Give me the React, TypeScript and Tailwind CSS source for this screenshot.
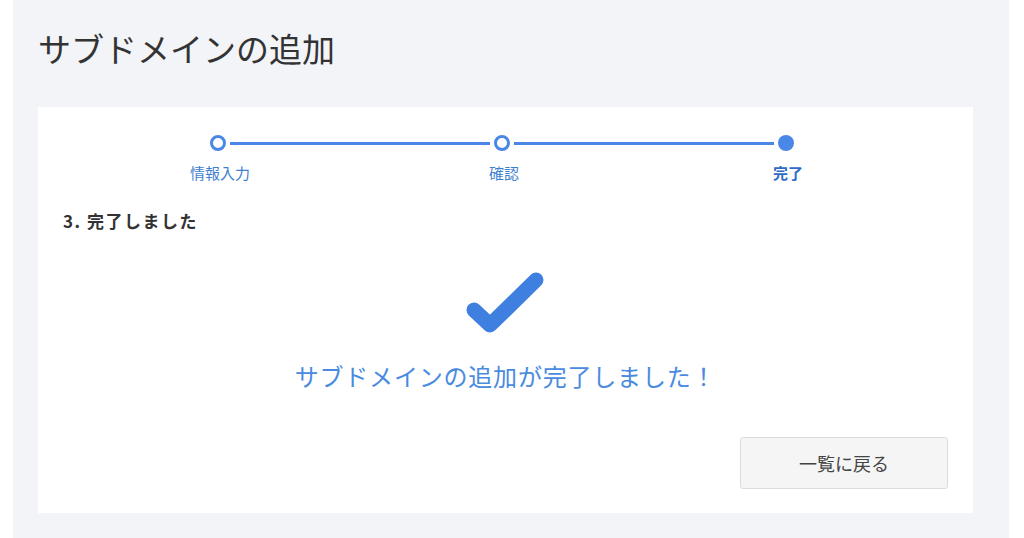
import React from "react";

const steps = [
  { label: "情報入力", state: "done" },
  { label: "確認", state: "done" },
  { label: "完了", state: "current" },
];

function Stepper() {
  return (
    <div className="ml-[13px]">
      {/* circles + connecting lines */}
      <div className="grid grid-cols-[284px_284px_284px]">
        {steps.map((s, i) => (
          <div key={s.label} className="flex h-4 items-center">
            <div
              className={
                "h-[3px] flex-1 mr-[4px] " + (i === 0 ? "bg-transparent" : "bg-[#4a87e6]")
              }
            />
            {s.state === "current" ? (
              <div className="h-4 w-4 rounded-full bg-[#4a87e6]" />
            ) : (
              <div className="h-4 w-4 rounded-full border-[3px] border-[#4a87e6] bg-white" />
            )}
            <div
              className={
                "h-[3px] flex-1 ml-[4px] " +
                (i === steps.length - 1 ? "bg-transparent" : "bg-[#4a87e6]")
              }
            />
          </div>
        ))}
      </div>
      {/* labels */}
      <div className="mt-3 grid grid-cols-[284px_284px_284px]">
        {steps.map((s) => (
          <div
            key={s.label}
            className={
              "pl-1 text-center text-[15px] leading-5 " +
              (s.state === "current" ? "font-bold text-[#2f6bc6]" : "text-[#3f7fd0]")
            }
          >
            {s.label}
          </div>
        ))}
      </div>
    </div>
  );
}

function CheckIcon() {
  return (
    <svg width="90" height="72" viewBox="0 0 90 72" fill="none">
      <polyline
        points="13,42 29,57 75,12"
        stroke="#3f7fe0"
        strokeWidth="15"
        strokeLinecap="round"
        strokeLinejoin="round"
      />
    </svg>
  );
}

export default function App() {
  return (
    <div
      className="flex h-[538px] w-full bg-white"
      style={{ fontFamily: '"Noto Sans CJK JP", "Noto Sans", sans-serif' }}
    >
      <div className="ml-[13px] h-full w-[996px] bg-[#f3f4f8] px-[25px] pt-[24px]">
        <h1 className="text-[33px] leading-[48px] font-normal text-[#333]">サブドメインの追加</h1>

        <div className="mt-[35px] w-[935px] bg-white px-[25px] pt-[28px] pb-[24px]">
          <Stepper />

          <div className="mt-[28px] text-[17px] leading-5 tracking-[1.5px] font-bold text-[#333]">
            3. 完了しました
          </div>

          <div className="mt-[37px] flex justify-center">
            <CheckIcon />
          </div>

          <p className="mt-[18px] text-center text-[24px] leading-9 tracking-[0.8px] text-[#4a8be0]">
            サブドメインの追加が完了しました！
          </p>

          <div className="mt-[43px] flex justify-end">
            <button className="h-[52px] w-[208px] rounded-[3px] border border-[#dcdcdc] bg-[#f5f5f5] text-[18px] text-[#444]">
              一覧に戻る
            </button>
          </div>
        </div>
      </div>
    </div>
  );
}
